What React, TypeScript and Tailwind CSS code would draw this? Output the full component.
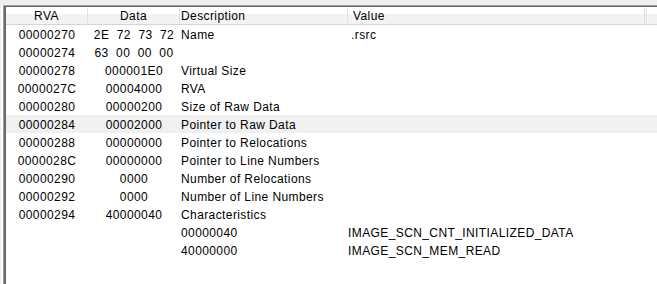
import React from "react";

type Row = { rva: string; data: string; desc: string; value: string; hl?: boolean };

const rows: Row[] = [
  { rva: "00000270", data: "2E  72  73  72", desc: "Name", value: ".rsrc" },
  { rva: "00000274", data: "63  00  00  00", desc: "", value: "" },
  { rva: "00000278", data: "000001E0", desc: "Virtual Size", value: "" },
  { rva: "0000027C", data: "00004000", desc: "RVA", value: "" },
  { rva: "00000280", data: "00000200", desc: "Size of Raw Data", value: "" },
  { rva: "00000284", data: "00002000", desc: "Pointer to Raw Data", value: "", hl: true },
  { rva: "00000288", data: "00000000", desc: "Pointer to Relocations", value: "" },
  { rva: "0000028C", data: "00000000", desc: "Pointer to Line Numbers", value: "" },
  { rva: "00000290", data: "0000", desc: "Number of Relocations", value: "" },
  { rva: "00000292", data: "0000", desc: "Number of Line Numbers", value: "" },
  { rva: "00000294", data: "40000040", desc: "Characteristics", value: "" },
  { rva: "", data: "", desc: "00000040", value: "IMAGE_SCN_CNT_INITIALIZED_DATA" },
  { rva: "", data: "", desc: "40000000", value: "IMAGE_SCN_MEM_READ" },
];

const cols = "grid grid-cols-[82px_92px_168px_297px_1fr]";

export default function App() {
  return (
    <div
      className="w-[657px] h-[284px] overflow-hidden bg-[#f0f0f0] pt-[5px] pl-[1px] text-black"
      style={{ fontFamily: '"Liberation Sans", Arial, sans-serif' }}
    >
      <div className="h-full border-l-2 border-white">
        <div className="h-full border-l border-t border-[#a0a0a0]">
          <div className="h-full border-l-2 border-t border-[#696969] bg-white text-[12px] tracking-[0.4px]">
            {/* column header */}
            <div className={`${cols} h-[18px] border-b border-[#d5d5d5] bg-[linear-gradient(to_bottom,#ffffff_0%,#ffffff_40%,#f3f3f4_41%,#f3f3f4_100%)] pt-[1px] leading-[16px]`}>
              <div className="border-r border-[#e3e3e3] text-center">RVA</div>
              <div className="border-r border-[#e3e3e3] text-center">Data</div>
              <div className="border-r border-[#e3e3e3] pl-[1px]">Description</div>
              <div className="border-r border-[#dcdcdc] pl-[5px]">Value</div>
              <div className="ml-[1px] border-l border-[#e3e3e3]" />
            </div>
            {/* section table rows */}
            {rows.map((r, i) => (
              <div
                key={i}
                className={`${cols} h-[18px] pt-[2px] leading-[16px] ${r.hl ? "bg-[#f0f0f0]" : ""}`}
              >
                <div className="text-center">{r.rva}</div>
                <div className="text-center whitespace-pre">{r.data}</div>
                <div className="pl-[1px] whitespace-pre">{r.desc}</div>
                <div className={r.value.startsWith(".") ? "pl-[3px]" : "pl-0"}>{r.value}</div>
                <div />
              </div>
            ))}
          </div>
        </div>
      </div>
    </div>
  );
}
